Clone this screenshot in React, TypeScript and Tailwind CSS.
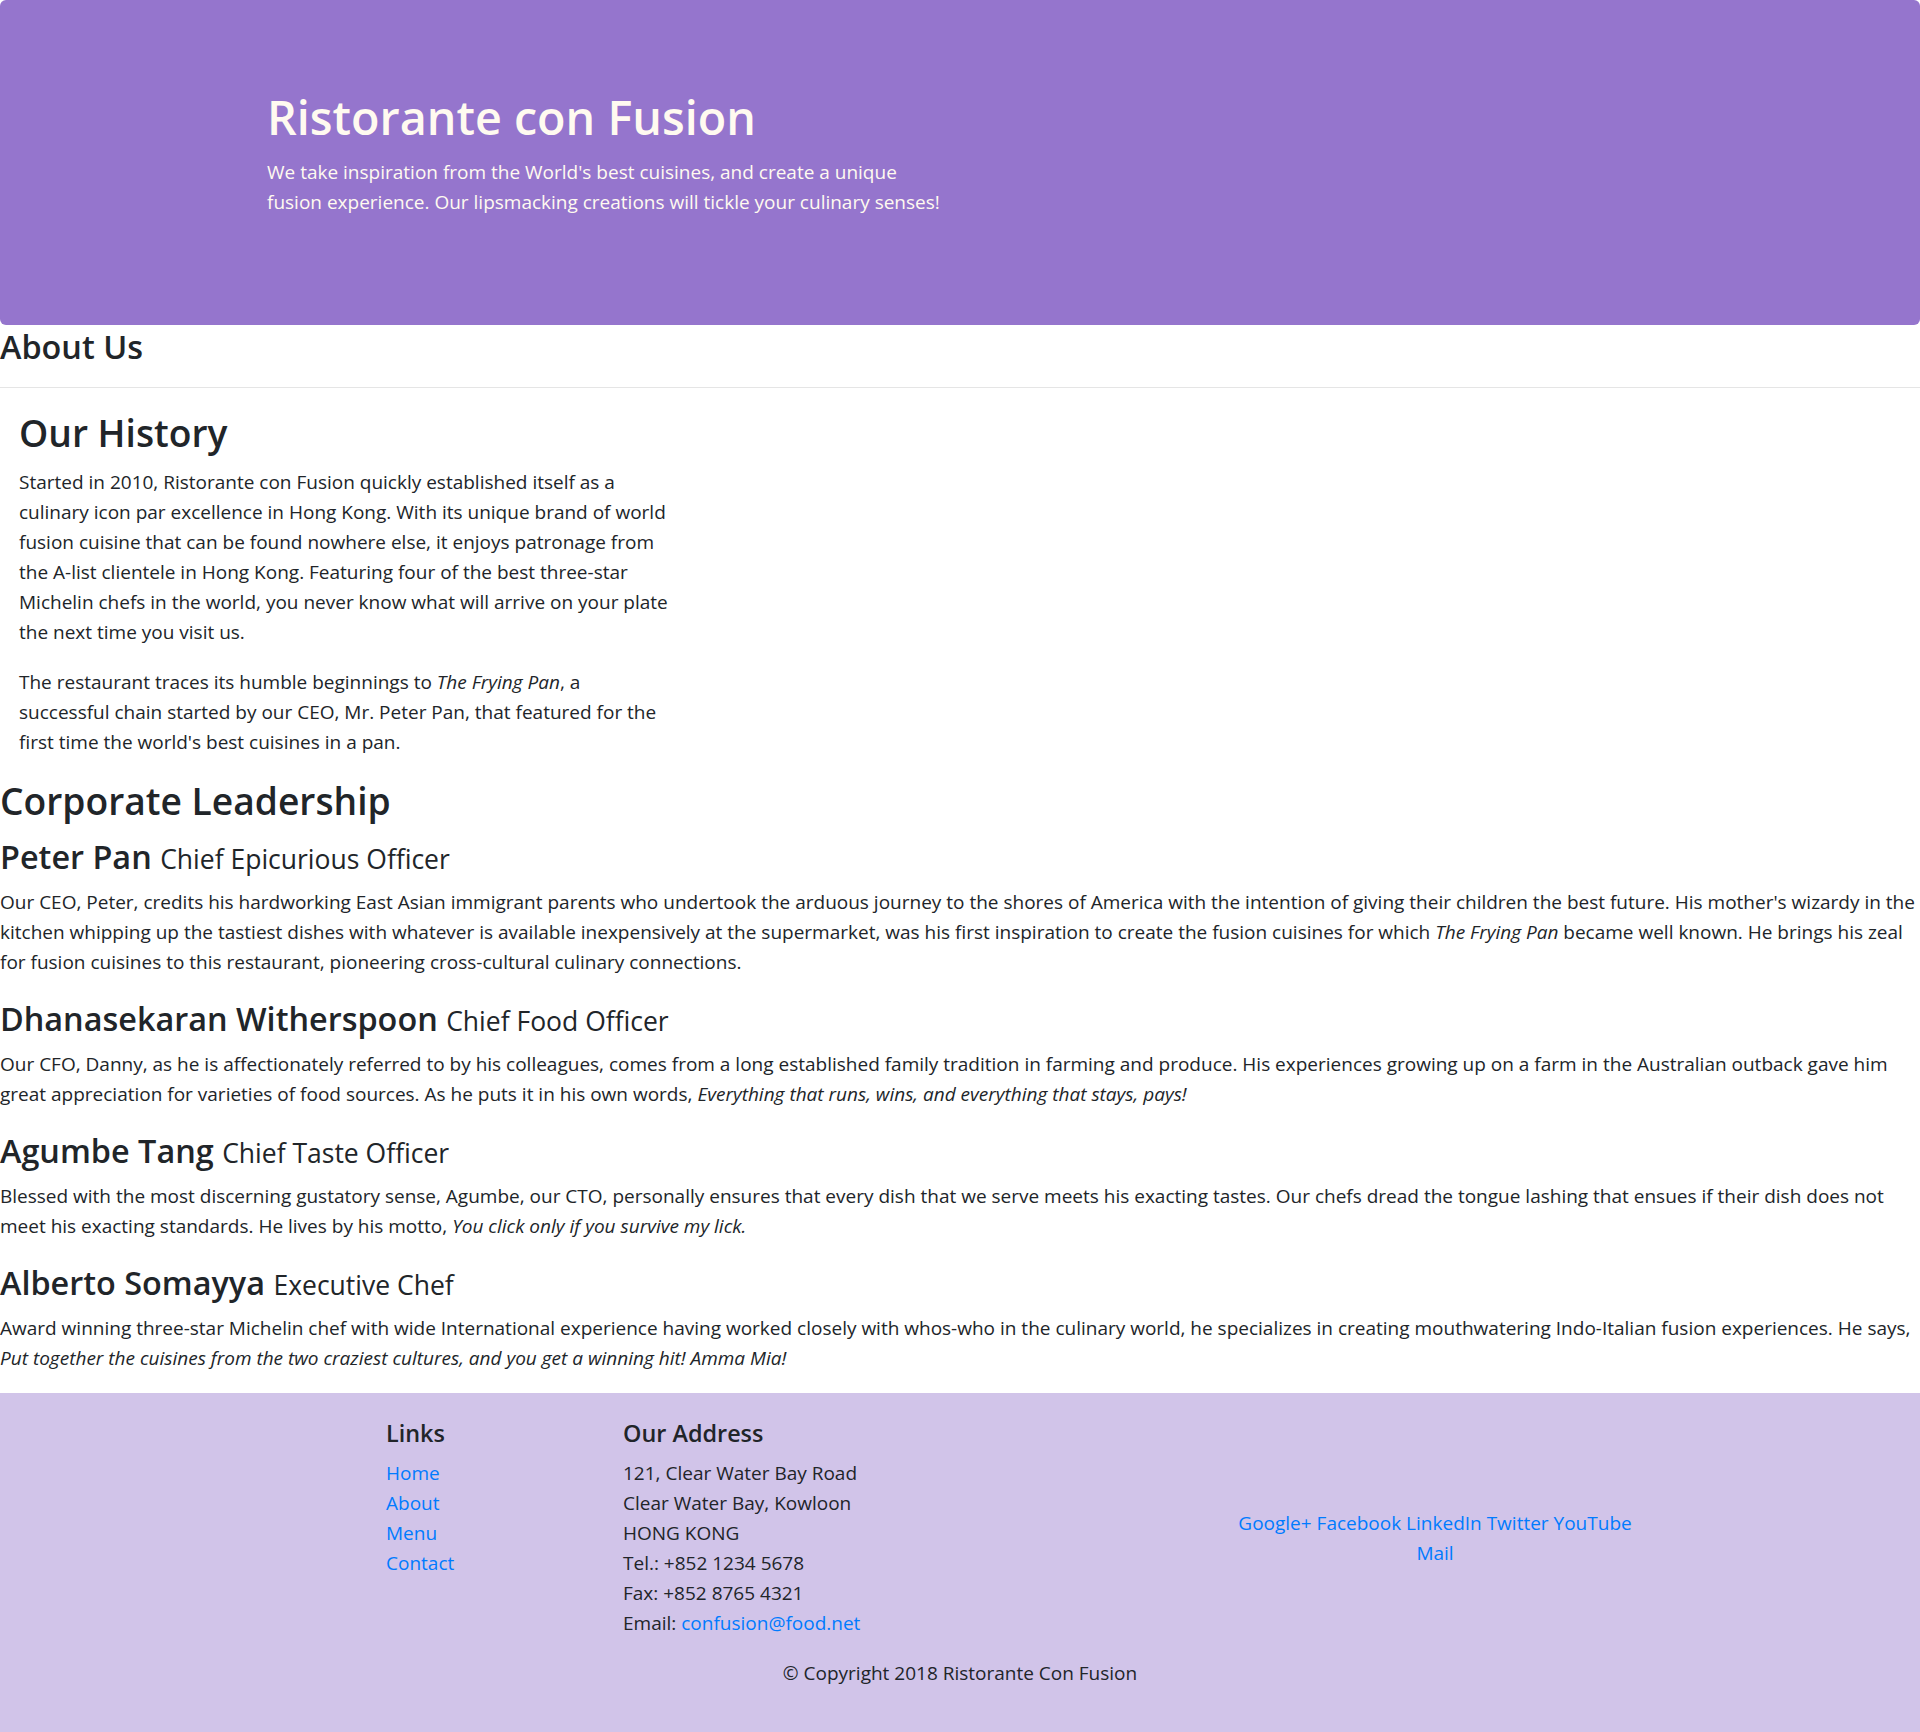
import React from "react";

const leaders = [
  {
    name: "Peter Pan",
    title: "Chief Epicurious Officer",
    body: (
      <>
        Our CEO, Peter, credits his hardworking East Asian immigrant parents who undertook the arduous journey to the
        shores of America with the intention of giving their children the best future. His mother's wizardy in the
        kitchen whipping up the tastiest dishes with whatever is available inexpensively at the supermarket, was his
        first inspiration to create the fusion cuisines for which <em>The Frying Pan</em> became well known. He brings
        his zeal for fusion cuisines to this restaurant, pioneering cross-cultural culinary connections.
      </>
    ),
  },
  {
    name: "Dhanasekaran Witherspoon",
    title: "Chief Food Officer",
    body: (
      <>
        Our CFO, Danny, as he is affectionately referred to by his colleagues, comes from a long established family
        tradition in farming and produce. His experiences growing up on a farm in the Australian outback gave him great
        appreciation for varieties of food sources. As he puts it in his own words,{" "}
        <em>Everything that runs, wins, and everything that stays, pays!</em>
      </>
    ),
  },
  {
    name: "Agumbe Tang",
    title: "Chief Taste Officer",
    body: (
      <>
        Blessed with the most discerning gustatory sense, Agumbe, our CTO, personally ensures that every dish that we
        serve meets his exacting tastes. Our chefs dread the tongue lashing that ensues if their dish does not meet his
        exacting standards. He lives by his motto, <em>You click only if you survive my lick.</em>
      </>
    ),
  },
  {
    name: "Alberto Somayya",
    title: "Executive Chef",
    body: (
      <>
        Award winning three-star Michelin chef with wide International experience having worked closely with whos-who
        in the culinary world, he specializes in creating mouthwatering Indo-Italian fusion experiences. He says,{" "}
        <em>Put together the cuisines from the two craziest cultures, and you get a winning hit! Amma Mia!</em>
      </>
    ),
  },
];

export default function App() {
  return (
    <div className="bg-white font-['Open_Sans',sans-serif] text-[19px] leading-[30px] text-[#212529]">
      {/* JUMBOTRON */}
      <header className="rounded-[6px] bg-[#9575cd] pt-[87px] pb-[88px] text-[#fffaf0]">
        <div className="ml-[267px] w-[675px]">
          <h1 className="mb-[10px] text-[46.7px] font-semibold leading-[60px]">Ristorante con Fusion</h1>
          <p className="mb-[20px]">
            We take inspiration from the World's best cuisines, and create a unique fusion experience. Our lipsmacking
            creations will tickle your culinary senses!
          </p>
        </div>
      </header>

      {/* ABOUT */}
      <div>
        <h3 className="text-[32.4px] font-semibold leading-[42px]">About Us</h3>
        <hr className="mt-[20px] mb-[20px] border-t border-[#e5e5e5]" />
      </div>

      <div className="w-[712px] px-[19px] pt-px">
        <h2 className="mb-[10px] text-[37.2px] font-semibold leading-[48px]">Our History</h2>
        <p className="mb-[20px]">
          Started in 2010, Ristorante con Fusion quickly established itself as a<br />
          culinary icon par excellence in Hong Kong. With its unique brand of world<br />
          fusion cuisine that can be found nowhere else, it enjoys patronage from<br />
          the A-list clientele in Hong Kong. Featuring four of the best three-star<br />
          Michelin chefs in the world, you never know what will arrive on your plate<br />
          the next time you visit us.
        </p>
        <p className="mb-[20px]">
          The restaurant traces its humble beginnings to <em>The Frying Pan</em>, a<br />
          successful chain started by our CEO, Mr. Peter Pan, that featured for the<br />
          first time the world's best cuisines in a pan.
        </p>
      </div>

      {/* LEADERSHIP */}
      <div className="mt-px">
        <h2 className="mb-[10px] text-[37.2px] font-semibold leading-[48px]">Corporate Leadership</h2>
        {leaders.map((l) => (
          <div key={l.name}>
            <h3 className="mb-[10px] text-[32.4px] font-semibold leading-[42px]">
              {l.name} <small className="text-[26.5px] font-normal leading-none">{l.title}</small>
            </h3>
            <p className="mb-[20px]">{l.body}</p>
          </div>
        ))}
      </div>

      {/* FOOTER */}
      <footer className="bg-[#d1c4e9] py-[25px]">
        <div className="flex pl-[386px]">
          <div className="w-[237px]">
            <h5 className="mb-[10px] text-[23.4px] font-semibold leading-[30px]">Links</h5>
            <ul className="text-[#007bff]">
              <li>Home</li>
              <li>About</li>
              <li>Menu</li>
              <li>Contact</li>
            </ul>
          </div>
          <div className="w-[567px]">
            <h5 className="mb-[10px] text-[23.4px] font-semibold leading-[30px]">Our Address</h5>
            <address className="mb-[20px] not-italic">
              121, Clear Water Bay Road
              <br />
              Clear Water Bay, Kowloon
              <br />
              HONG KONG
              <br />
              Tel.: +852 1234 5678
              <br />
              Fax: +852 8765 4321
              <br />
              Email: <span className="text-[#007bff]">confusion@food.net</span>
            </address>
          </div>
          <div className="w-[490px] self-center text-center text-[#007bff]">
            <div>Google+ Facebook LinkedIn Twitter YouTube</div>
            <div>Mail</div>
          </div>
        </div>
        <p className="mb-[20px] text-center">© Copyright 2018 Ristorante Con Fusion</p>
      </footer>
    </div>
  );
}
